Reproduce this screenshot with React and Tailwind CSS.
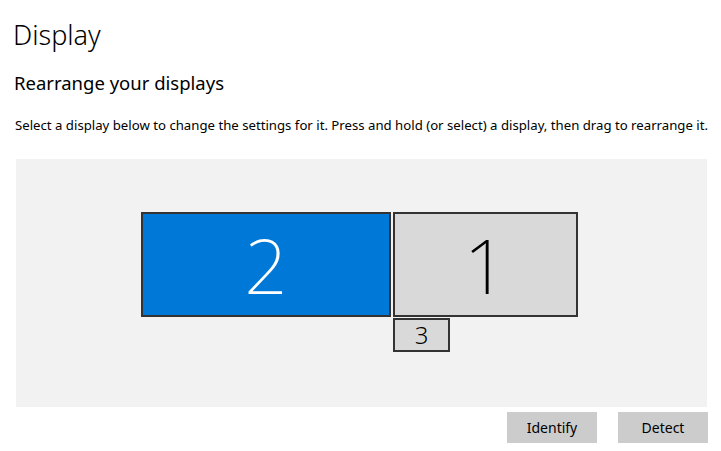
export default function App() {
  return (
    <div className="w-[721px] h-[451px] bg-white text-black font-['Noto_Sans',sans-serif] overflow-hidden">
      <h1 className="pl-[13px] pt-[17px] text-[27px] leading-[36px] font-light">Display</h1>
      <h2 className="pl-[14px] pt-[18px] text-[18.5px] leading-[24px]">Rearrange your displays</h2>
      <p className="pl-[15px] pt-[21px] text-[13.2px] leading-[18px] whitespace-nowrap">
        Select a display below to change the settings for it. Press and hold (or select) a display, then drag to rearrange it.
      </p>
      <div className="relative ml-[16px] mt-[25px] w-[691px] h-[248px] bg-[#f2f2f2]">
        <div className="absolute left-[125px] top-[53px] w-[250px] h-[105px] bg-[#0078d7] border-2 border-[#333] flex items-center justify-center text-white text-[76px] font-extralight leading-none">
          2
        </div>
        <div className="absolute left-[377px] top-[53px] w-[185px] h-[105px] bg-[#d9d9d9] border-2 border-[#333] flex items-center justify-center text-black text-[76px] font-extralight leading-none">
          1
        </div>
        <div className="absolute left-[377px] top-[159px] w-[57px] h-[34px] bg-[#d9d9d9] border-2 border-[#333] flex items-center justify-center text-black text-[24px] font-light leading-none">
          3
        </div>
      </div>
      <div className="flex justify-end gap-[21px] pr-[13px] pt-[5px]">
        <button className="w-[90px] h-[31px] bg-[#cccccc] text-[14px]">Identify</button>
        <button className="w-[90px] h-[31px] bg-[#cccccc] text-[14px]">Detect</button>
      </div>
    </div>
  );
}
